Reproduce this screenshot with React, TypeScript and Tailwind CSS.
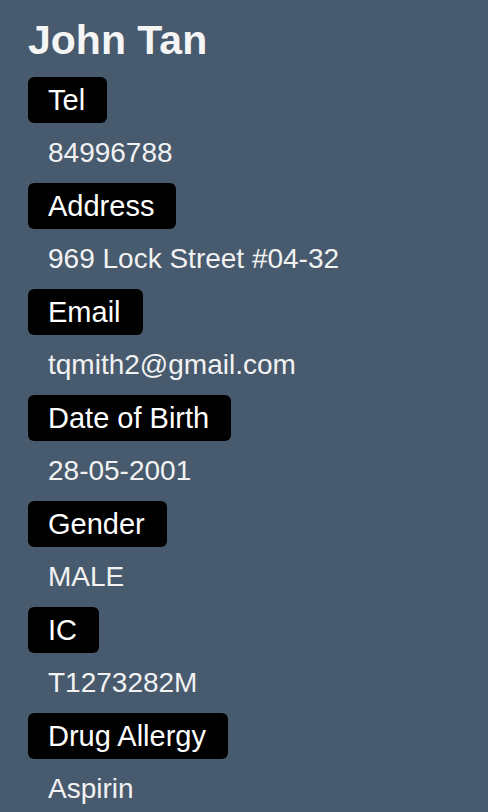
const fields = [
  { label: "Tel", value: "84996788" },
  { label: "Address", value: "969 Lock Street #04-32" },
  { label: "Email", value: "tqmith2@gmail.com" },
  { label: "Date of Birth", value: "28-05-2001" },
  { label: "Gender", value: "MALE" },
  { label: "IC", value: "T1273282M" },
  { label: "Drug Allergy", value: "Aspirin" },
];

export default function App() {
  return (
    <div
      className="min-h-screen w-full bg-[#475a6e] px-7 pt-4 text-white"
      style={{ fontFamily: '"Liberation Sans", Arial, sans-serif' }}
    >
      <h1 className="mb-[13px] h-12 text-[41px] font-bold leading-[48px] text-[#f5f5f5]">John Tan</h1>
      <div className="flex flex-col">
        {fields.map((f) => (
          <div key={f.label} className="flex flex-col items-start">
            <span className="h-[46px] rounded-md bg-black pl-5 pr-[22px] text-[29px] leading-[46px] text-white">
              {f.label}
            </span>
            <p className="py-[14px] pl-5 text-[28px] leading-8 text-[#f2f2f2]">{f.value}</p>
          </div>
        ))}
      </div>
    </div>
  );
}
